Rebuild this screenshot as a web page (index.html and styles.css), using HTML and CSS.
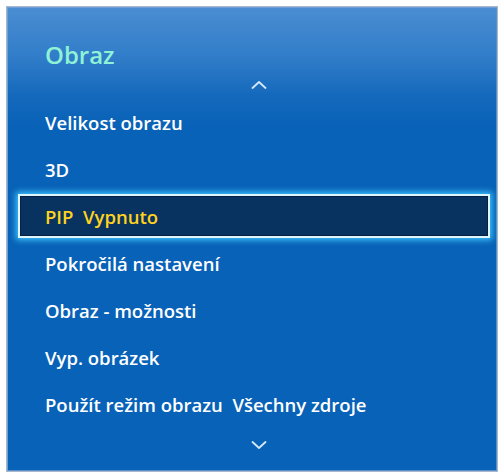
FILE: index.html
```html
<!DOCTYPE html>
<html lang="cs">
<head>
<meta charset="utf-8">
<title>Obraz</title>
<link rel="stylesheet" href="styles.css">
</head>
<body>
<div class="panel">
  <div class="title">Obraz</div>
  <div class="arrow arrow-up">
    <svg width="16" height="9" viewBox="0 0 16 9"><path d="M1.5 8 L8 2 L14.5 8" fill="none" stroke="#d6e8f8" stroke-width="1.8" stroke-linecap="round" stroke-linejoin="round"/></svg>
  </div>
  <ul class="menu">
    <li class="item">Velikost obrazu</li>
    <li class="item">3D</li>
    <li class="item selected"><span class="sel-box">PIP&nbsp; Vypnuto</span></li>
    <li class="item">Pokročilá nastavení</li>
    <li class="item">Obraz - možnosti</li>
    <li class="item">Vyp. obrázek</li>
    <li class="item">Použít režim obrazu&nbsp; Všechny zdroje</li>
  </ul>
  <div class="arrow arrow-down">
    <svg width="16" height="9" viewBox="0 0 16 9"><path d="M1.5 1 L8 7 L14.5 1" fill="none" stroke="#d6e8f8" stroke-width="1.8" stroke-linecap="round" stroke-linejoin="round"/></svg>
  </div>
</div>
</body>
</html>
```
FILE: styles.css
```css
html, body {
  margin: 0;
  padding: 0;
  background: #ffffff;
}
body {
  padding: 6px 3px 1px 6px;
  font-family: "Open Sans", "Liberation Sans", sans-serif;
}
.panel {
  box-sizing: border-box;
  width: 492px;
  height: 466px;
  border: 1px solid #a9b9cb;
  box-shadow: inset 1px 1px 0 #6e9fd6, inset -1px -1px 0 #5a8fcc;
  background: linear-gradient(to bottom, #4a8dd1 0px, #347fca 45px, #1569bc 88px, #0862b7 120px, #0862b7 100%);
  display: flex;
  flex-direction: column;
}
.title {
  margin-top: 31px;
  padding-left: 38px;
  height: 34px;
  line-height: 34px;
  font-size: 24px;
  font-weight: 600;
  color: #8ff2d6;
}
.arrow {
  display: flex;
  justify-content: center;
  padding-left: 14px;
}
.arrow svg { display: block; }
.arrow-up {
  height: 25px;
  align-items: center;
}
.menu {
  list-style: none;
  margin: 2px 0 0;
  padding: 0;
}
.item {
  height: 47px;
  line-height: 47px;
  padding-left: 38px;
  font-size: 18.5px;
  font-weight: 600;
  color: #ffffff;
  white-space: nowrap;
}
.item.selected {
  padding: 1px 7px 2px 11px;
  height: 44px;
  line-height: normal;
}
.sel-box {
  box-sizing: border-box;
  display: flex;
  align-items: center;
  height: 44px;
  padding-left: 25px;
  color: #ffd21e;
  background: #08325f;
  border: 2px solid #dff6ff;
  box-shadow: 0 0 6px 2px #3fc6ff, inset 0 0 0 1px #0a2040;
}
.arrow-down {
  height: 26px;
  align-items: center;
  padding-top: 4px;
}
```
